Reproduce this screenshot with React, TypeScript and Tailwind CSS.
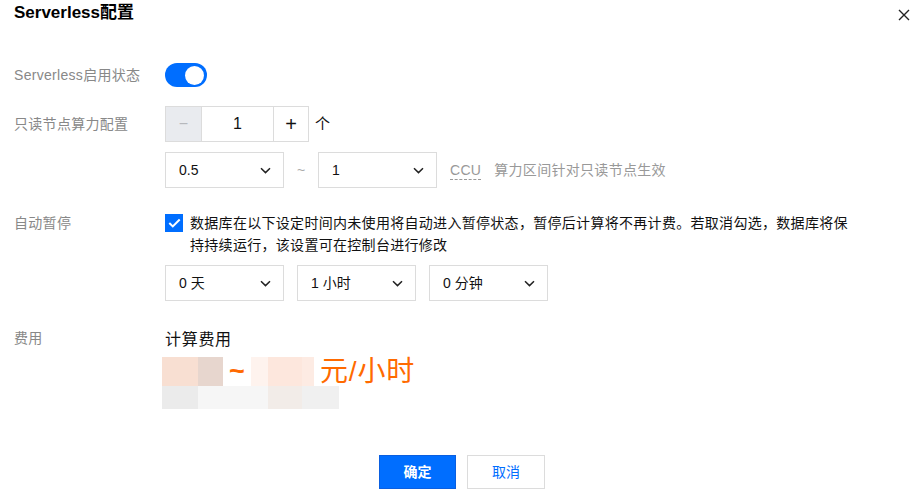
import React from "react";

const Chevron = () => (
  <svg width="11" height="7" viewBox="0 0 11 7" fill="none" className="shrink-0">
    <path d="M1 1.2 L5.5 5.6 L10 1.2" stroke="#222" strokeWidth="1.5" />
  </svg>
);

const Select = ({ value, w }: { value: string; w: string }) => (
  <div className={`${w} h-[36px] border border-[#dcdcdc] bg-white flex items-center justify-between pl-[13px] pr-[12px] text-[14px] text-[#111]`}>
    <span>{value}</span>
    <Chevron />
  </div>
);

export default function App() {
  return (
    <div
      className="w-[920px] h-[492px] bg-white relative overflow-hidden text-[#111]"
      style={{ fontFamily: '"Liberation Sans", "Noto Sans CJK SC", sans-serif' }}
    >
      {/* title */}
      <div className="flex items-start justify-between pl-[14px] pr-[10px] pt-[1px]">
        <div className="text-[17px] leading-[24px] font-bold text-black">Serverless配置</div>
        <svg width="12" height="12" viewBox="0 0 12 12" className="mt-[8px]">
          <path d="M1 1 L11 11 M11 1 L1 11" stroke="#222" strokeWidth="1.4" />
        </svg>
      </div>

      <div className="pl-[14px]">
        {/* toggle row */}
        <div className="flex items-center mt-[38px] h-[24px]">
          <div className="w-[151px] shrink-0 text-[14px] tracking-[0.3px] text-[#888]">Serverless启用状态</div>
          <div className="w-[42px] h-[24px] rounded-full bg-[#006eff] flex items-center justify-end pr-[3px]">
            <div className="w-[19px] h-[19px] rounded-full bg-white" />
          </div>
        </div>

        {/* stepper row */}
        <div className="flex items-center mt-[19px] h-[36px]">
          <div className="w-[151px] shrink-0 text-[14px] tracking-[0.3px] text-[#888]">只读节点算力配置</div>
          <div className="flex h-[36px] border border-[#dcdcdc]">
            <div className="w-[36px] bg-[#e9ebef] border-r border-[#dcdcdc] flex items-center justify-center text-[#b6b8bc] text-[16px]">−</div>
            <div className="w-[71px] flex items-center justify-center text-[16px] text-[#111]">1</div>
            <div className="w-[35px] border-l border-[#dcdcdc] flex items-center justify-center text-[20px] text-[#111]">+</div>
          </div>
          <div className="ml-[6px] text-[15px] text-[#111]">个</div>
        </div>

        {/* select range row */}
        <div className="flex items-center mt-[10px] h-[36px]">
          <div className="w-[151px] shrink-0" />
          <Select value="0.5" w="w-[119px]" />
          <div className="w-[34px] text-center text-[14px] text-[#aaa]">~</div>
          <Select value="1" w="w-[119px]" />
          <div className="ml-[13px] text-[14px] tracking-[0.3px] text-[#999] border-b border-dashed border-[#999] leading-[18px]">CCU</div>
          <div className="ml-[13px] text-[14px] tracking-[0.3px] text-[#999]">算力区间针对只读节点生效</div>
        </div>

        {/* auto pause */}
        <div className="flex mt-[24px]">
          <div className="w-[151px] shrink-0 text-[14px] tracking-[0.3px] leading-[22px] text-[#888]">自动暂停</div>
          <div>
            <div className="flex">
              <div className="w-[18px] h-[18px] bg-[#006eff] flex items-center justify-center mt-[2px] shrink-0">
                <svg width="13" height="10" viewBox="0 0 13 10">
                  <path d="M1.3 5 L4.8 8.4 L11.7 1.5" stroke="white" strokeWidth="2" fill="none" />
                </svg>
              </div>
              <div className="ml-[7px] w-[660px] text-[14px] leading-[22px] text-[#111] tracking-[0.3px]">
                数据库在以下设定时间内未使用将自动进入暂停状态，暂停后计算将不再计费。若取消勾选，数据库将保持持续运行，该设置可在控制台进行修改
              </div>
            </div>
            <div className="flex gap-[13px] mt-[9px]">
              <Select value="0 天" w="w-[119px]" />
              <Select value="1 小时" w="w-[119px]" />
              <Select value="0 分钟" w="w-[119px]" />
            </div>
          </div>
        </div>

        {/* fee */}
        <div className="flex mt-[27px]">
          <div className="w-[151px] shrink-0 text-[14px] tracking-[0.3px] leading-[22px] text-[#888] mt-[-1px]">费用</div>
          <div>
            <div className="text-[16px] tracking-[0.7px] leading-[24px] text-[#111]">计算费用</div>
            <div className="ml-[-3px] mt-[5px]">
              <div className="flex h-[29px] items-center">
                <div className="w-[36px] h-[29px] bg-[#f8dfd2]" />
                <div className="w-[25px] h-[29px] bg-[#e7d6ce]" />
                <div className="w-[28px] text-center text-[27px] leading-[29px] text-[#ff6a00] font-bold">~</div>
                <div className="w-[17px] h-[29px] bg-[#fef3ee]" />
                <div className="w-[34px] h-[29px] bg-[#fde7dd]" />
                <div className="w-[12px] h-[29px] bg-[#fdebe3]" />
                <div className="ml-[6px] text-[28px] tracking-[0.8px] leading-[29px] text-[#ff6a00]">元/小时</div>
              </div>
              <div className="flex h-[23px]">
                <div className="w-[36px] bg-[#ebebeb]" />
                <div className="w-[70px] bg-[#f6f6f6]" />
                <div className="w-[34px] bg-[#f2ece8]" />
                <div className="w-[37px] bg-[#f0f0f0]" />
              </div>
            </div>
          </div>
        </div>
      </div>

      {/* buttons */}
      <div className="absolute left-0 right-0 top-[455px] flex justify-center gap-[11px] pl-[4px]">
        <button className="w-[77px] h-[34px] bg-[#006eff] border border-[#0a5fe0] text-white text-[14px] font-bold">确定</button>
        <button className="w-[78px] h-[34px] bg-white border border-[#dcdcdc] text-[#006eff] text-[14px]">取消</button>
      </div>
    </div>
  );
}
